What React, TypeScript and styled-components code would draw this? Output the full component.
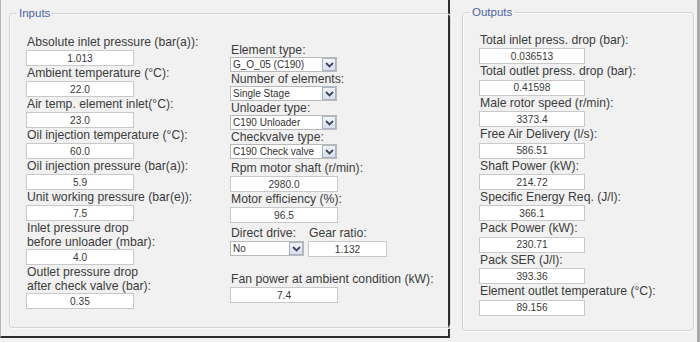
import styled, { createGlobalStyle } from "styled-components";

type Field = { label: string; value: string };

const inletFields: Field[] = [
  { label: "Absolute inlet pressure (bar(a)):", value: "1.013" },
  { label: "Ambient temperature (°C):", value: "22.0" },
  { label: "Air temp. element inlet(°C):", value: "23.0" },
  { label: "Oil injection temperature (°C):", value: "60.0" },
  { label: "Oil injection pressure (bar(a)):", value: "5.9" },
  { label: "Unit working pressure (bar(e)):", value: "7.5" },
  { label: "Inlet pressure drop\nbefore unloader (mbar):", value: "4.0" },
  { label: "Outlet pressure drop\nafter check valve (bar):", value: "0.35" },
];

const choiceFields: Field[] = [
  { label: "Element type:", value: "G_O_05 (C190)" },
  { label: "Number of elements:", value: "Single Stage" },
  { label: "Unloader type:", value: "C190 Unloader" },
  { label: "Checkvalve type:", value: "C190 Check valve" },
];

const outputFields: Field[] = [
  { label: "Total inlet press. drop (bar):", value: "0.036513" },
  { label: "Total outlet press. drop (bar):", value: "0.41598" },
  { label: "Male rotor speed (r/min):", value: "3373.4" },
  { label: "Free Air Delivery (l/s):", value: "586.51" },
  { label: "Shaft Power (kW):", value: "214.72" },
  { label: "Specific Energy Req. (J/l):", value: "366.1" },
  { label: "Pack Power (kW):", value: "230.71" },
  { label: "Pack SER (J/l):", value: "393.36" },
  { label: "Element outlet temperature (°C):", value: "89.156" },
];

function Chevron() {
  return (
    <svg width="9" height="6" viewBox="0 0 9 6">
      <polyline points="1,1 4.5,4.5 8,1" fill="none" stroke="#3b4862" strokeWidth="1.8" />
    </svg>
  );
}

function Dropdown({ value, width }: { value: string; width: number }) {
  return (
    <Select $width={width}>
      <SelectText>{value}</SelectText>
      <SelectButton>
        <Chevron />
      </SelectButton>
    </Select>
  );
}

export default function App() {
  return (
    <>
      <GlobalStyle />
      <Screen>
        <InputsPanel>
          <Group $width={436} $padTop={15} $padBottom={18}>
            <Legend>Inputs</Legend>
            <Columns>
              <Column>
                {inletFields.map((f) => (
                  <div key={f.label}>
                    <Label $multi={f.label.includes("\n")}>{f.label}</Label>
                    <ValueBox readOnly value={f.value} />
                  </div>
                ))}
              </Column>
              <Column $top={8}>
                {choiceFields.map((f) => (
                  <div key={f.label}>
                    <Label $height={14}>{f.label}</Label>
                    <Dropdown value={f.value} width={107} />
                  </div>
                ))}
                <Spaced $top={2}>
                  <Label>Rpm motor shaft (r/min):</Label>
                  <ValueBox readOnly value="2980.0" />
                </Spaced>
                <div>
                  <Label>Motor efficiency (%):</Label>
                  <ValueBox readOnly value="96.5" />
                </div>
                <DriveRow>
                  <div>
                    <Label>Direct drive:</Label>
                    <Dropdown value="No" width={74} />
                  </div>
                  <div>
                    <Label>Gear ratio:</Label>
                    <ValueBox readOnly value="1.132" $width={79} />
                  </div>
                </DriveRow>
                <Spaced $top={15}>
                  <Label>Fan power at ambient condition (kW):</Label>
                  <ValueBox readOnly value="7.4" />
                </Spaced>
              </Column>
            </Columns>
          </Group>
        </InputsPanel>
        <OutputsPanel>
          <Group $width={232} $padTop={14} $padBottom={14}>
            <Legend>Outputs</Legend>
            <Column>
              {outputFields.map((f) => (
                <div key={f.label}>
                  <Label $height={15.4}>{f.label}</Label>
                  <ValueBox readOnly value={f.value} $width={106} />
                </div>
              ))}
            </Column>
          </Group>
        </OutputsPanel>
      </Screen>
    </>
  );
}

const GlobalStyle = createGlobalStyle`
  html, body {
    margin: 0;
    padding: 0;
  }
  body {
    background: #f1f1f1;
    font-family: "Liberation Sans", Arial, sans-serif;
    color: #3a3a3a;
  }
`;

const Screen = styled.div`
  display: flex;
  height: 342px;
  overflow: hidden;
`;

const InputsPanel = styled.section`
  width: 439px;
  height: 330px;
  padding: 6px 0 0 8px;
  border-left: 1px solid #b4b4b4;
  border-right: 2px solid #2e2e2e;
  border-bottom: 2px solid #2e2e2e;
`;

const OutputsPanel = styled.section`
  flex: 1;
  padding: 5px 0 0 12px;
  border-right: 3px solid #a9a9a9;
`;

const Group = styled.fieldset<{ $width: number; $padTop: number; $padBottom: number }>`
  box-sizing: border-box;
  width: ${(p) => p.$width}px;
  margin: 0;
  padding: ${(p) => p.$padTop}px 16px ${(p) => p.$padBottom}px 16px;
  border: 1px solid #d2d2d2;
  border-radius: 4px;
  box-shadow: inset 1px 1px 0 #fbfbfb, 1px 1px 0 #fbfbfb;
`;

const Legend = styled.legend`
  margin-left: -9px;
  padding: 0 2px;
  font-size: 11.5px;
  line-height: 14px;
  color: #4d63a8;
`;

const Columns = styled.div`
  display: grid;
  grid-template-columns: 204px 1fr;
  align-items: start;
`;

const Column = styled.div<{ $top?: number }>`
  display: flex;
  flex-direction: column;
  margin-top: ${(p) => p.$top ?? 0}px;
`;

const Spaced = styled.div<{ $top: number }>`
  margin-top: ${(p) => p.$top}px;
`;

const Label = styled.div<{ $multi?: boolean; $height?: number }>`
  font-size: 12.2px;
  line-height: ${(p) => (p.$multi ? 14 : p.$height ?? 15)}px;
  white-space: pre;
  padding-left: 1px;
  color: #3c3c3c;
`;

const ValueBox = styled.input<{ $width?: number }>`
  display: block;
  box-sizing: border-box;
  width: ${(p) => p.$width ?? 108}px;
  height: 16px;
  margin: 0;
  padding: 0;
  border: 1px solid #c9c9c9;
  background: #fff;
  font-family: "Liberation Sans", Arial, sans-serif;
  font-size: 10.2px;
  color: #3a3a3a;
  text-align: center;
  outline: none;
`;

const Select = styled.div<{ $width: number }>`
  box-sizing: border-box;
  display: flex;
  align-items: stretch;
  width: ${(p) => p.$width}px;
  height: 15px;
  border: 1px solid #b9b9b9;
  background: #fff;
  font-size: 10px;
`;

const SelectText = styled.span`
  flex: 1;
  padding-left: 2px;
  line-height: 13px;
  color: #333;
  white-space: nowrap;
  overflow: hidden;
`;

const SelectButton = styled.span`
  box-sizing: border-box;
  width: 14px;
  display: flex;
  align-items: center;
  justify-content: center;
  border: 1px solid #a8b4c6;
  background: linear-gradient(#f3f5f9, #d8dfe9);
`;

const DriveRow = styled.div`
  display: flex;
  gap: 4px;
  margin-top: 3px;
`;
